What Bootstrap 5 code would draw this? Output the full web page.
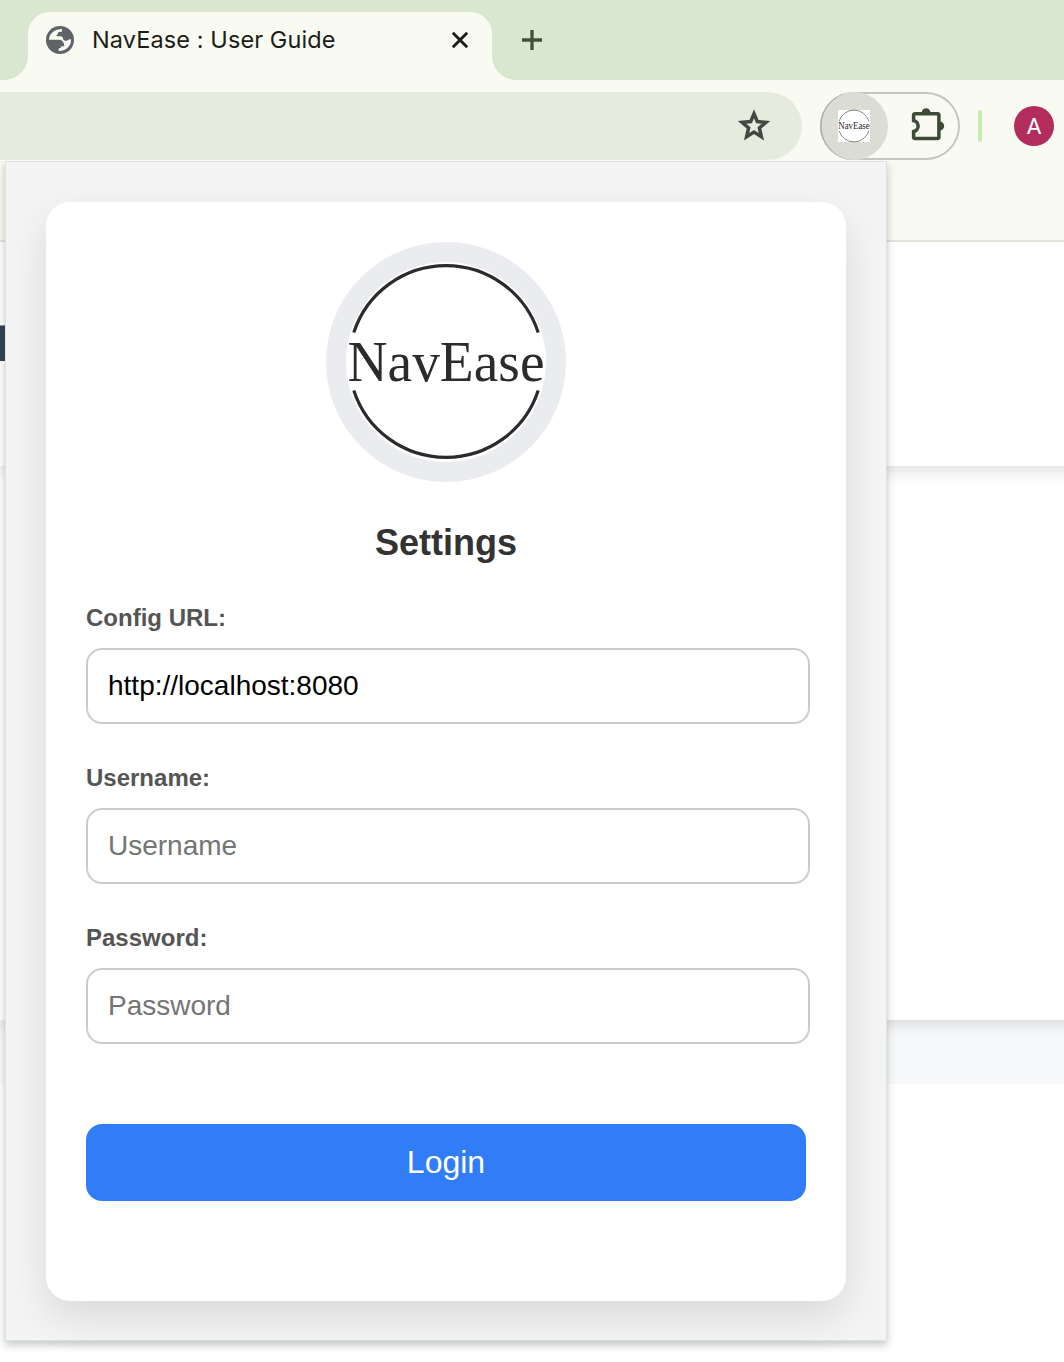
<!DOCTYPE html>
<html lang="en">
<head>
<meta charset="utf-8">
<meta name="viewport" content="width=device-width, initial-scale=1">
<title>NavEase : User Guide</title>
<link href="https://cdn.jsdelivr.net/npm/bootstrap@5.3.0/dist/css/bootstrap.min.css" rel="stylesheet">
<style>
body { font-family: "Liberation Sans", Arial, sans-serif; background: #fff; height: 1362px; overflow: hidden; }
svg { overflow: visible; flex-shrink: 0; }
.browser-head { z-index: 3; }
.tab-strip { height: 80px; background: #dae7d0; padding: 12px 0 0 28px; }
.browser-tab { width: 464px; height: 68px; background: #f9faf2; border-radius: 22px 22px 0 0; padding: 0 22px 12px 18px; }
.browser-tab::before, .browser-tab::after { content: ""; position: absolute; bottom: 0; width: 24px; height: 24px; }
.browser-tab::before { left: -24px; background: radial-gradient(circle at 0 0, #dae7d0 23.5px, #f9faf2 24.2px); }
.browser-tab::after { right: -24px; background: radial-gradient(circle at 100% 0, #dae7d0 23.5px, #f9faf2 24.2px); }
.tab-title { font: 400 23.5px/28px Inter, sans-serif; color: #1b1d18; margin-left: 18px; white-space: nowrap; letter-spacing: .1px; }
.new-tab { margin: 16px 0 0 28px; }
.tool-row { height: 162px; background: #f9faf2; border-bottom: 2px solid #e1e3d8; padding: 12px 10px 0 0; }
.address-bar { width: 802px; height: 68px; background: #e5ecdd; border-radius: 0 34px 34px 0; padding-right: 32px; }
.ext-group { width: 140px; height: 68px; margin-left: 18px; border-radius: 34px; box-shadow: inset 0 0 0 2px #c5c7be; }
.ext-active { width: 68px; height: 68px; background: #dbdcd4; border-radius: 34px; box-shadow: inset 2px 0 0 -0.4px #aeb0a8; }
.ext-thumb { width: 32px; height: 32px; background: #fff; }
.puzzle { margin-left: 22px; }
.profile-area { height: 68px; }
.bar-divider { width: 4px; height: 32px; border-radius: 2px; background: #c5efb0; margin-left: 18px; }
.avatar { width: 40px; height: 40px; background: #b22d5b; color: #fff; font: 400 22px/40px Inter, sans-serif; margin-left: 32px; }
.page-head { height: 224px; background: #fff; margin: 0 -40px 0 0; box-shadow: 0 4px 16px rgba(0,0,0,.14); z-index: 2; padding-top: 83px; }
.page-mark { width: 8px; height: 36px; background: #344050; border-top: 1px solid #8994a0; }
.page-main { height: 554px; background: #fff; margin-right: -40px; box-shadow: 0 4px 16px rgba(0,0,0,.14); z-index: 1; }
.page-foot { height: 64px; background: #f8f9fb; }
.ext-popup { left: 5px; top: 161px; width: 882px; height: 1180px; background: #f4f4f4; border: 1px solid #dde3e0; padding: 40px; z-index: 5; box-shadow: 0 4px 8px rgba(40,60,55,.28); clip-path: inset(0 -20px -20px -20px); }
.settings-card { width: 800px; height: 1099px; border-radius: 24px; background: #fff; box-shadow: 0 16px 40px rgba(0,0,0,.11); padding: 40px; }
.logo-ring { width: 240px; height: 240px; background: #ebecf0; }
.settings-title { font-size: 36px; font-weight: 700; line-height: 42px; color: #333; margin: 40px 0 0; }
.field-label { font-size: 24px; font-weight: 700; line-height: 28px; color: #555; margin: 0 0 16px; display: block; }
.field-input { width: 724px; height: 76px; border: 2px solid #ccc; border-radius: 16px; padding: 0 20px; font-size: 28px; color: #000; }
.field-input::placeholder { color: #757575; }
.field-input.form-control { max-width: none; }
.field-group { margin-bottom: 40px; }
.field-list { margin-top: 40px; }
.login-btn { height: 77px; border: 0; border-radius: 16px; background: #307df7; font-size: 32px; color: #fff; margin-top: 80px; padding: 0 0 2px; }
</style>
<script src="https://cdn.jsdelivr.net/npm/bootstrap@5.3.0/dist/js/bootstrap.bundle.min.js"></script>
</head>
<body class="position-relative">
<header class="browser-head position-relative">
  <div class="tab-strip d-flex">
    <div class="browser-tab position-relative d-flex align-items-center">
      <svg width="28" height="28" viewBox="138 78 84 84"><circle cx="180" cy="120" r="42" fill="#5f6368"/><path d="M147 119C147 103 161 88 186 87V92Q186 96 181 96H177Q173 97 173 102Q173 105 169 105Q169 109 174 109H183Q189 110 189 116Q190 122 196 122H201Q205 118 213 118C215 138 197 154 176 153V147Q176 144 180 144Q184 144 184 139H193Q193 128 187 123Q184 119 177 119Z" fill="#f9faf2"/></svg>
      <span class="tab-title">NavEase : User Guide</span>
      <svg class="ms-auto" width="20" height="20" viewBox="0 0 20 20" stroke="#1b1d18" stroke-width="2.900"><path d="M2.800 2.800 17.200 17.200M17.200 2.800 2.800 17.200"/></svg>
    </div>
    <svg class="new-tab" width="24" height="24" viewBox="0 0 24 24" stroke="#43503b" stroke-width="3.300"><path d="M2 12h20M12 2v20"/></svg>
  </div>
  <div class="tool-row d-flex align-items-start">
    <div class="address-bar d-flex align-items-center justify-content-end">
      <svg width="32" height="32" viewBox="0 0 32 32" fill="none" stroke="#454842" stroke-width="3.500"><path d="m16 3.700 3.300 7.900 8.600.7-6.500 5.600 2 8.900-7.400-4.700-7.400 4.700 2-8.900-6.500-5.600 8.600-.7z"/></svg>
    </div>
    <div class="ext-group d-flex align-items-center">
      <div class="ext-active d-flex align-items-center justify-content-center">
        <div class="ext-thumb d-flex"><svg width="32" height="32" viewBox="0 0 200 200"><path d="M7 70A97 97 0 0 1 193 70M7 130A97 97 0 0 0 193 130" fill="none" stroke="#666" stroke-width="5"/><text x="2" y="119" textLength="196" lengthAdjust="spacingAndGlyphs" font-family="Liberation Serif, serif" font-size="60" fill="#2b2b2b">NavEase</text></svg></div>
      </div>
      <svg class="puzzle" width="36" height="36" viewBox="0 0 36 36"><path d="M5 5.700h22.500a1.400 1.400 0 0 1 1.400 1.400v22a1.400 1.400 0 0 1-1.400 1.400H5a1.400 1.400 0 0 1-1.400-1.400v-5.600a5.600 5.600 0 0 0 0-11V7.100A1.400 1.400 0 0 1 5 5.700z" fill="none" stroke="#3d4a35" stroke-width="3.500"/><path d="M11.700 5a4.400 4.800 0 0 1 8.800 0zM29.500 13.500a4.700 4.500 0 0 1 0 9z" fill="#3d4a35"/></svg>
    </div>
    <div class="profile-area d-flex align-items-center"><div class="bar-divider"></div><div class="avatar rounded-circle text-center">A</div></div>
  </div>
</header>
<main>
  <section class="page-head position-relative"><div class="page-mark"></div></section>
  <section class="page-main position-relative"></section>
  <div class="page-foot"></div>
</main>
<aside class="ext-popup position-absolute">
  <div class="settings-card">
    <div class="logo-ring rounded-circle mx-auto d-flex align-items-center justify-content-center">
      <svg width="200" height="200" viewBox="0 0 200 200"><circle cx="100" cy="100" r="100" fill="#fff"/><path d="M7.800 70.500A97 97 0 0 1 192.200 70.500M7.800 128.500A97 97 0 0 0 192.200 128.500" fill="none" stroke="#2b2b2b" stroke-width="3.200"/><text x="1.500" y="119" textLength="197" lengthAdjust="spacingAndGlyphs" font-family="Liberation Serif, serif" font-size="58" fill="#2b2b2b">NavEase</text></svg>
    </div>
    <h1 class="settings-title text-center">Settings</h1>
    <form class="field-list">
      <div class="field-group"><label class="field-label" for="url">Config URL:</label><input id="url" class="form-control field-input" type="text" value="http://localhost:8080"></div>
      <div class="field-group"><label class="field-label" for="user">Username:</label><input id="user" class="form-control field-input" type="text" placeholder="Username"></div>
      <div class="field-group mb-0"><label class="field-label" for="pass">Password:</label><input id="pass" class="form-control field-input" type="password" placeholder="Password"></div>
      <button class="btn btn-primary login-btn w-100" type="button">Login</button>
    </form>
  </div>
</aside>
</body>
</html>
